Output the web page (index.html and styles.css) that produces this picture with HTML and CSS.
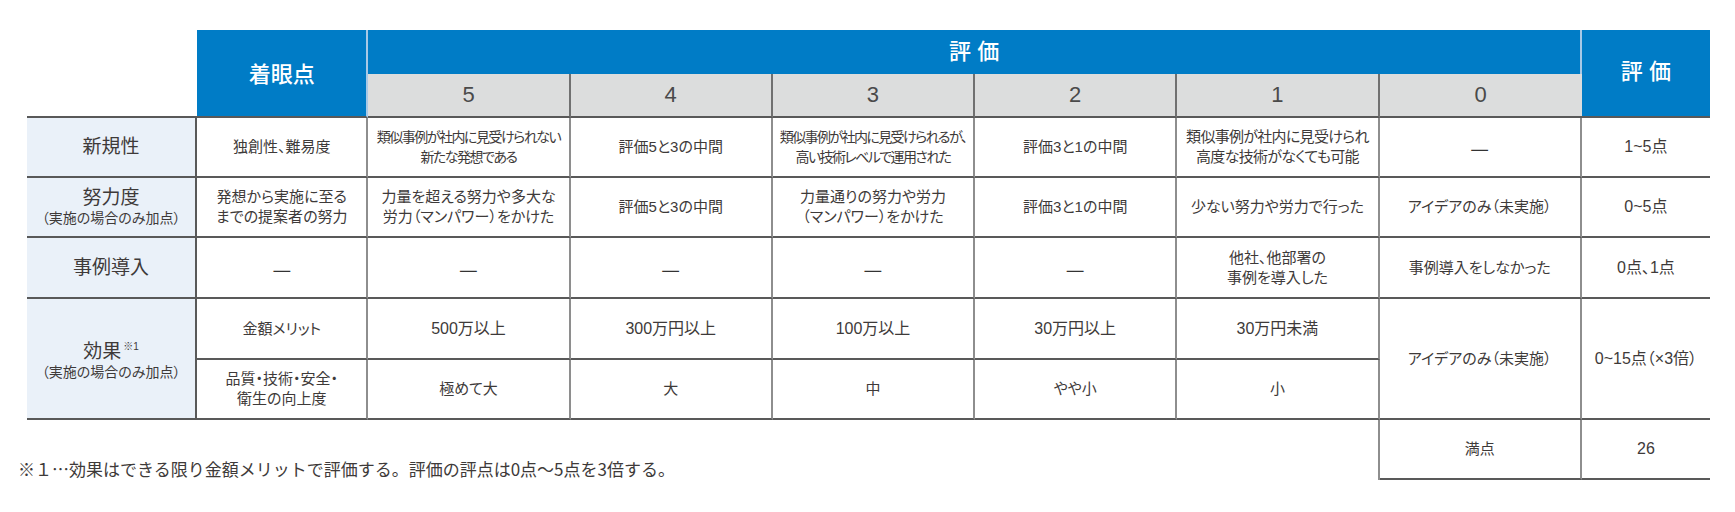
FILE: index.html
```html
<!DOCTYPE html>
<html lang="ja">
<head>
<meta charset="utf-8">
<title>評価基準</title>
<link rel="stylesheet" href="styles.css">
</head>
<body>
<div class="page">
<table class="eval">
<colgroup>
<col class="c-label"><col class="c-focus">
<col class="c-lv"><col class="c-lv"><col class="c-lv"><col class="c-lv"><col class="c-lv"><col class="c-lv">
<col class="c-score">
</colgroup>
<thead>
<tr class="band">
<th class="blank" rowspan="2"></th>
<th class="hd focus-hd" rowspan="2">着眼点</th>
<th class="hd band-hd" colspan="6">評 価</th>
<th class="hd score-hd" rowspan="2">評 価</th>
</tr>
<tr class="levels">
<th class="lv">5</th><th class="lv">4</th><th class="lv">3</th><th class="lv">2</th><th class="lv">1</th><th class="lv lv-last">0</th>
</tr>
</thead>
<tbody>
<tr class="r60">
<th class="label"><span class="main">新規性</span></th>
<td>独創性、難易度</td>
<td class="tight-a">類似事例が社内に見受けられない<br>新たな発想である</td>
<td>評価5と3の中間</td>
<td class="tight-b">類似事例が社内に見受けられるが、<br>高い技術レベルで運用された</td>
<td>評価3と1の中間</td>
<td class="tight-c">類似事例が社内に見受けられ<br>高度な技術がなくても可能</td>
<td class="dash"><span class="bar">—</span></td>
<td class="score">1~5点</td>
</tr>
<tr class="r60">
<th class="label"><span class="main">努力度</span><span class="sub">（実施の場合のみ加点）</span></th>
<td>発想から実施に至る<br>までの提案者の努力</td>
<td>力量を超える努力や多大な<br>労力（マンパワー）をかけた</td>
<td>評価5と3の中間</td>
<td>力量通りの努力や労力<br>（マンパワー）をかけた</td>
<td>評価3と1の中間</td>
<td>少ない努力や労力で行った</td>
<td>アイデアのみ（未実施）</td>
<td class="score">0~5点</td>
</tr>
<tr class="r61">
<th class="label"><span class="main">事例導入</span></th>
<td class="dash"><span class="bar">—</span></td>
<td class="dash"><span class="bar">—</span></td>
<td class="dash"><span class="bar">—</span></td>
<td class="dash"><span class="bar">—</span></td>
<td class="dash"><span class="bar">—</span></td>
<td>他社、他部署の<br>事例を導入した</td>
<td>事例導入をしなかった</td>
<td class="score">0点、1点</td>
</tr>
<tr class="r61">
<th class="label" rowspan="2"><span class="main">効果<span class="note-mark">※1</span></span><span class="sub">（実施の場合のみ加点）</span></th>
<td>金額メリット</td>
<td class="num">500万以上</td>
<td class="num">300万円以上</td>
<td class="num">100万以上</td>
<td class="num">30万円以上</td>
<td class="num">30万円未満</td>
<td rowspan="2">アイデアのみ（未実施）</td>
<td rowspan="2" class="score">0~15点（×3倍）</td>
</tr>
<tr class="r60">
<td>品質・技術・安全・<br>衛生の向上度</td>
<td>極めて大</td>
<td>大</td>
<td>中</td>
<td>やや小</td>
<td>小</td>
</tr>
<tr class="r60 total">
<td class="note" colspan="7"><p class="note-text">※１…効果はできる限り金額メリットで評価する。評価の評点は0点～5点を3倍する。</p></td>
<td>満点</td>
<td class="score">26</td>
</tr>
</tbody>
</table>
</div>
</body>
</html>
```
FILE: styles.css
```css
html, body {
  margin: 0;
  padding: 0;
  background: #ffffff;
}

body {
  font-family: "Liberation Sans", "Noto Sans CJK JP", sans-serif;
  color: #3e3a39;
}

.page {
  padding: 30px 0 0 27px;
}

.eval {
  border-collapse: separate;
  border-spacing: 0;
  table-layout: fixed;
  width: 1683px;
}

.c-label { width: 170px; }
.c-focus { width: 171px; }
.c-lv { width: 202px; }
.c-score { width: 128px; }

.eval th,
.eval td {
  box-sizing: border-box;
  padding: 0;
  text-align: center;
  vertical-align: middle;
  font-weight: normal;
  font-size: 15px;
  line-height: 20px;
  font-feature-settings: "palt";
  border-bottom: 2px solid #595959;
  border-right: 2px solid #8e8e8e;
}

/* header */
.band { height: 44px; }
.levels { height: 44px; }

.eval .blank {
  background: #ffffff;
  border-right: none;
}

.eval .hd {
  background: #007cc6;
  color: #ffffff;
  font-size: 22px;
  line-height: 26px;
  font-weight: 500;
  border-right: 2px solid #a8c9e6;
}

.eval .focus-hd {
  padding-top: 4px;
}

.eval .band-hd {
  border-bottom: none;
}

.eval .score-hd {
  border-right: none;
  padding-bottom: 2px;
}

.eval .lv {
  background: #dcdddd;
  color: #4a4a4a;
  font-size: 22px;
  line-height: 26px;
  border-right: 2px solid #707070;
}

.eval .lv-last {
  border-right: none;
}

/* body rows */
.r60 { height: 60px; }
.r61 { height: 61px; }

.eval .label {
  background: #eaf1f9;
  border-right: 2px solid #595959;
}

.label .main {
  display: block;
  font-size: 19px;
  line-height: 22px;
}

.label .sub {
  display: block;
  font-size: 14px;
  line-height: 18px;
}

.note-mark {
  font-size: 10px;
  vertical-align: 8px;
  margin-left: 2px;
}

.eval .tight-a { font-size: 14px; letter-spacing: -1.5px; }
.eval .tight-b { font-size: 14px; letter-spacing: -1.6px; }
.eval .tight-c { letter-spacing: -0.7px; }

.eval .num { font-size: 16px; }

.eval .score {
  border-right: none;
  font-size: 16px;
}

.eval .dash {
  padding-top: 4px;
}

.bar {
  font-family: "Noto Sans CJK JP", sans-serif;
  font-size: 21px;
  color: #333333;
}

/* footnote row */
.eval .note {
  border-bottom: none;
  text-align: left;
  vertical-align: bottom;
}

.note-text {
  margin: 0 0 0 -9px;
  font-family: "Noto Sans CJK JP", sans-serif;
  font-feature-settings: normal;
  font-size: 17px;
  line-height: 22px;
  white-space: nowrap;
}
```
